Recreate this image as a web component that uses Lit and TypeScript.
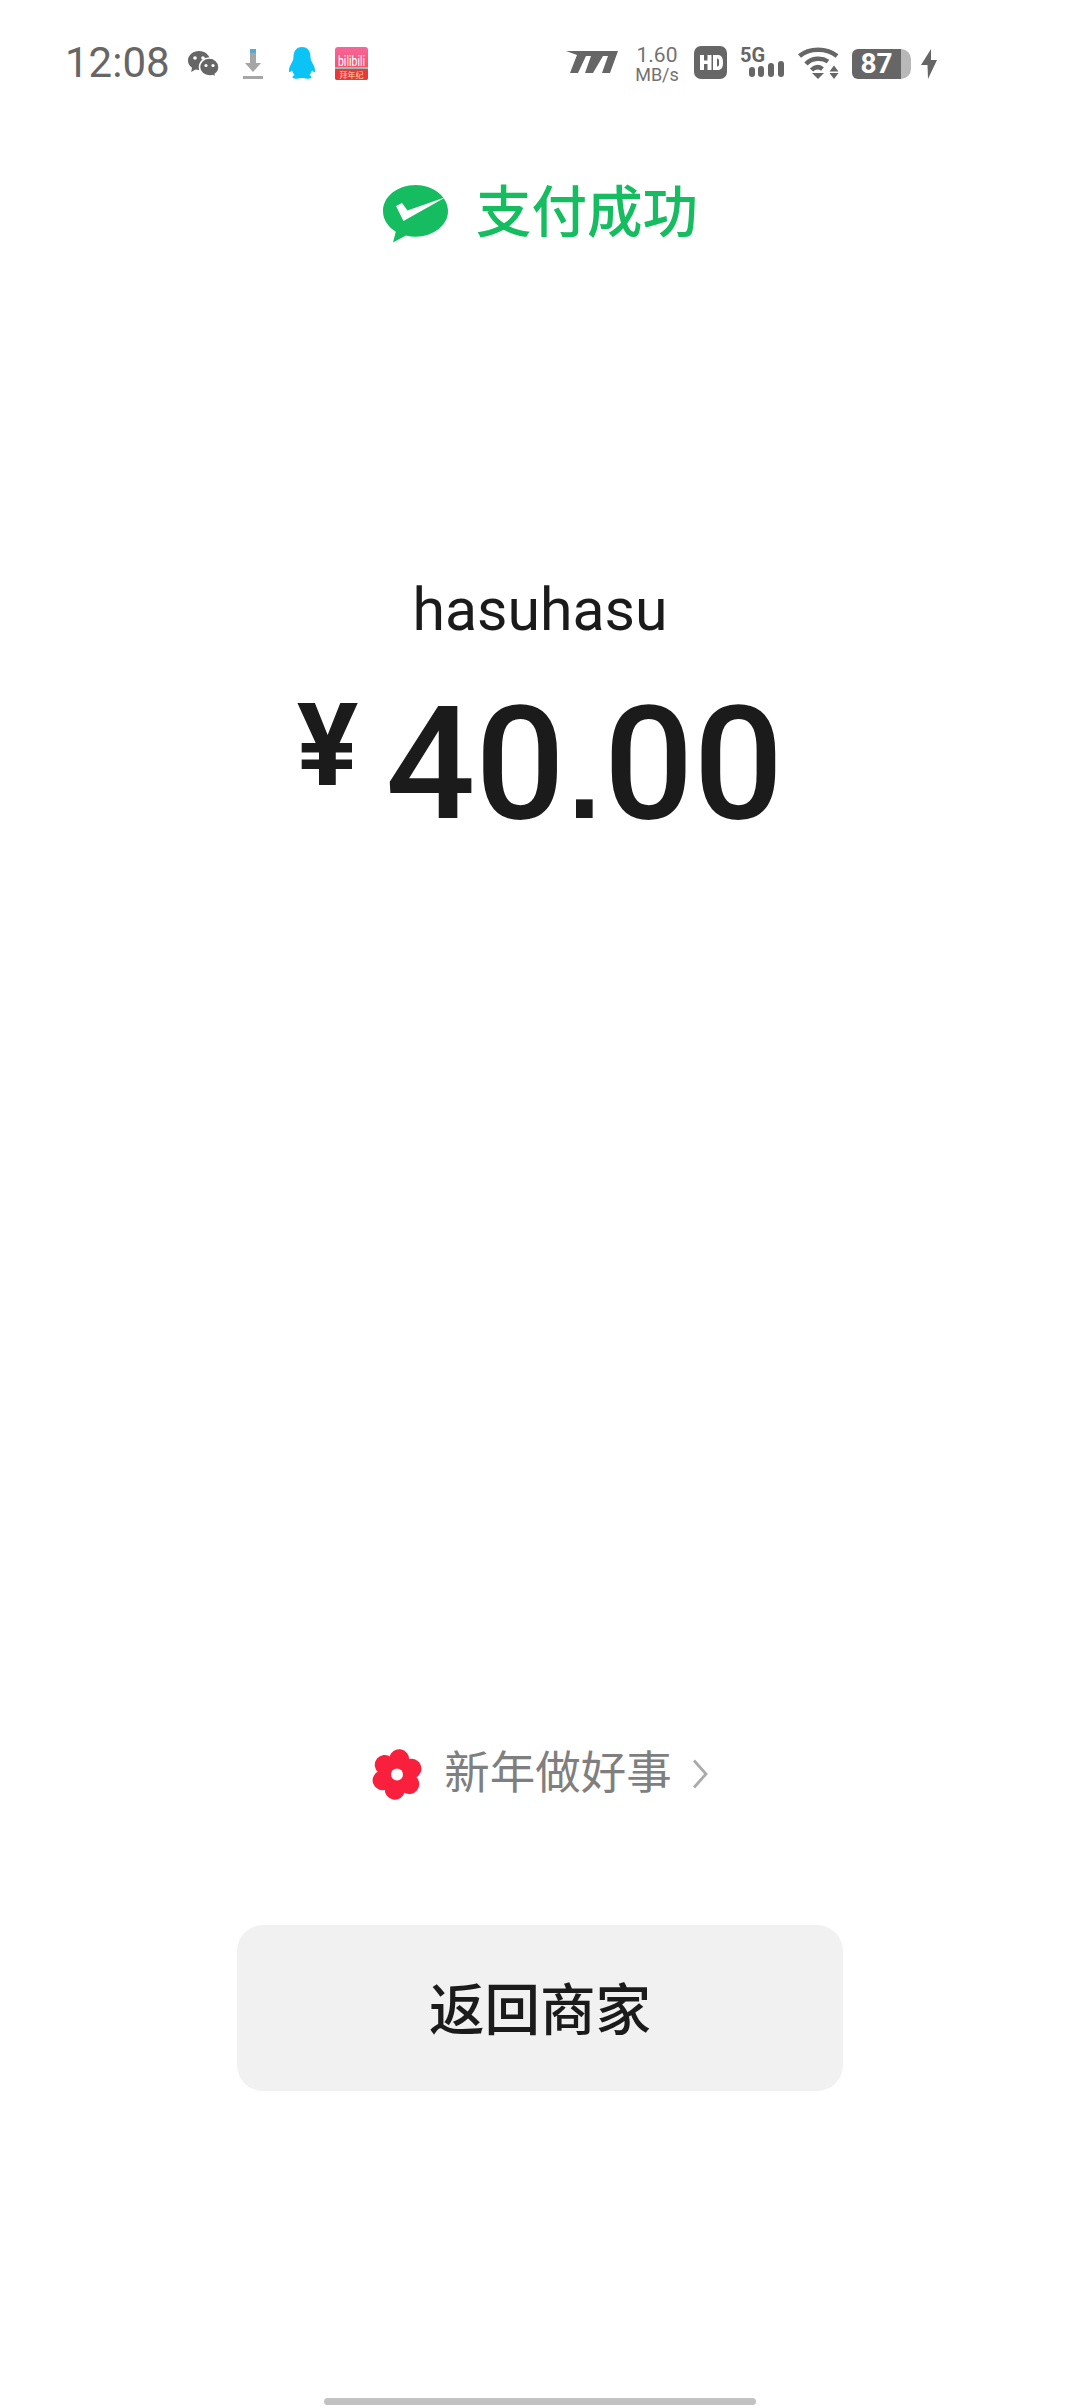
import {LitElement, html, css, svg} from 'lit';
import {customElement} from 'lit/decorators.js';

const PETALS = [8, 68, 128, 188, 248, 308];

@customElement('app-root')
export class AppRoot extends LitElement {
    static styles = css`
        :host {
            display: block;
            width: 1080px;
            height: 2408px;
            background: #fff;
            font-family: Roboto, "Noto Sans CJK SC", sans-serif;
            color: #1b1b1b;
        }

        .page {
            height: 2408px;
            display: flex;
            flex-direction: column;
            align-items: center;
            overflow: hidden;
        }

        .page > * { flex: none; }

        /* Status bar */
        .status {
            box-sizing: border-box;
            width: 100%;
            height: 126px;
            padding: 45px 143px 0 65px;
            display: flex;
            justify-content: space-between;
            align-items: flex-start;
            color: #666;
        }

        .status-left,
        .status-right {
            display: flex;
            align-items: flex-start;
        }

        .time {
            width: 103px;
            font-size: 42px;
            line-height: 36px;
            color: #666;
        }

        .i-wechat { margin: 5px 0 0 20px; }
        .i-download { margin: 4px 0 0 23px; }
        .i-qq { margin: 2px 0 0 25px; }
        .i-bili { margin: 2px 0 0 19px; }
        .i-hd { margin: 1px 0 0 15px; }
        .i-wifi { margin: 2px 0 0 14px; }
        .i-bolt { margin: 4px 0 0 10px; }
        .i-speed { margin-top: 6px; }

        .speed {
            width: 44px;
            margin-left: 16px;
            display: flex;
            flex-direction: column;
            align-items: center;
            font-size: 21px;
            color: #727272;
        }

        .speed span { line-height: 21px; }
        .speed span + span { font-size: 18px; line-height: 17px; }

        .signal {
            width: 44px;
            margin: 3px 0 0 13px;
            display: flex;
            flex-direction: column;
        }

        .signal-label {
            font-size: 20px;
            font-weight: 700;
            line-height: 14px;
            color: #666;
        }

        .signal svg { margin-top: -15px; }

        .battery {
            margin: 4px 0 0 13px;
            display: flex;
            align-items: center;
        }

        .battery-body {
            width: 49px;
            height: 30px;
            border-radius: 6px 0 0 6px;
            background: #666;
            color: #fff;
            font-size: 28px;
            font-weight: 700;
            line-height: 30px;
            text-align: center;
        }

        .battery-rest {
            width: 10px;
            height: 30px;
            border-radius: 0 10px 10px 0;
            background: #b8b8b8;
        }

        /* Result */
        .result {
            margin-top: 56px;
            display: flex;
            align-items: center;
            gap: 27px;
        }

        .result-text {
            font-size: 55.5px;
            line-height: 64px;
            font-weight: 500;
            color: #15bd60;
        }

        .payee {
            margin-top: 331px;
            font-size: 59px;
            line-height: 66px;
            color: #1b1b1b;
        }

        .amount {
            margin-top: 46px;
            display: flex;
            align-items: flex-start;
            gap: 27px;
            height: 150px;
        }

        .yen {
            font-size: 115px;
            line-height: 110px;
            font-weight: 700;
            margin-top: 2px;
        }

        .value {
            font-size: 158px;
            line-height: 150px;
            font-weight: 500;
        }

        .dot {
            font-family: "Liberation Sans", sans-serif;
            font-size: 175px;
            line-height: 0;
            margin: 0 -5px;
        }

        /* Bottom */
        .promo {
            margin-top: 909px;
            display: flex;
            align-items: center;
            color: #7f7f7f;
            font-size: 45.5px;
            line-height: 52px;
        }

        .promo-text { margin: 0 20px 0 22px; }

        .back {
            margin-top: 125px;
            box-sizing: border-box;
            width: 606px;
            height: 166px;
            padding-bottom: 5px;
            border-radius: 26px;
            background: #f1f1f1;
            display: flex;
            align-items: center;
            justify-content: center;
            font-size: 55.5px;
            font-weight: 500;
            color: #1b1b1b;
        }

        .home {
            margin-top: 307px;
            width: 432px;
            height: 7px;
            border-radius: 4px;
            background: #c2c2c2;
        }

        svg { display: block; flex: none; }
    `;

    render() {
        return html`
            <div class="page">
                <div class="status">
                    <div class="status-left">
                        <div class="time">12:08</div>
                        ${this.renderWechat()}
                        ${this.renderDownload()}
                        ${this.renderQQ()}
                        ${this.renderBili()}
                    </div>
                    <div class="status-right">
                        ${this.renderSpeedLogo()}
                        <div class="speed"><span>1.60</span><span>MB/s</span></div>
                        ${this.renderHD()}
                        <div class="signal">
                            <div class="signal-label">5G</div>
                            ${this.renderBars()}
                        </div>
                        ${this.renderWifi()}
                        <div class="battery">
                            <div class="battery-body">87</div>
                            <div class="battery-rest"></div>
                        </div>
                        ${this.renderBolt()}
                    </div>
                </div>

                <div class="result">
                    ${this.renderPayLogo()}
                    <div class="result-text">支付成功</div>
                </div>

                <div class="payee">hasuhasu</div>
                <div class="amount">
                    <div class="yen">¥</div>
                    <div class="value">40<span class="dot">.</span>00</div>
                </div>

                <div class="promo">
                    ${this.renderFlower()}
                    <span class="promo-text">新年做好事</span>
                    <svg width="16" height="30" viewBox="0 0 16 30">
                        <path d="M2 1.5 14 15 2 28.5" fill="none" stroke="#ababab" stroke-width="2.8"/>
                    </svg>
                </div>

                <div class="back">返回商家</div>
                <div class="home"></div>
            </div>
        `;
    }

    renderWechat() {
        return html`<svg class="i-wechat" width="32" height="27" viewBox="0 0 32 27">
            <path d="M11 1C5 1 0 5.200 0 10.500c0 3 1.600 5.600 4 7.300L3.200 22l4.400-2.400c1.100.3 2.200.4 3.400.4 6 0 11-4.200 11-9.500S17 1 11 1z" fill="#666"/>
            <path d="M21.500 8C16 8 11.500 12 11.500 17s4.500 9 10 9c1 0 2-.1 3-.4l3.600 1.400-.8-3c2.400-1.600 3.700-4 3.700-7 0-5-4.500-9-9.500-9z" fill="#666" stroke="#fff" stroke-width="1.500"/>
            <circle cx="7" cy="8" r="1.800" fill="#fff"/>
            <circle cx="15" cy="8" r="1.800" fill="#fff"/>
            <circle cx="18" cy="15.500" r="1.600" fill="#fff"/>
            <circle cx="25" cy="15.500" r="1.600" fill="#fff"/>
        </svg>`;
    }

    renderDownload() {
        return html`<svg class="i-download" width="20" height="30" viewBox="0 0 20 30">
            <rect x="7" y="0" width="6" height="4" fill="#5aa9d0"/>
            <path d="M7 4h6v10h5l-8 9-8-9h5z" fill="#a6a6a6"/>
            <rect x="0" y="27" width="20" height="3" fill="#a6a6a6"/>
        </svg>`;
    }

    renderQQ() {
        return html`<svg class="i-qq" width="28" height="32" viewBox="0 0 28 32">
            <path d="M14 0C8 0 5.500 4.500 5.500 10c0 1.500-.3 3-1 4.300C2.500 18 .5 21.500 1 24.500c.2 1.200 1.800.6 3-1.200.4 1.800 1.300 3.400 2.600 4.600C4.500 28.600 4 30 5 31c1.500 1 5 1 7.500 0h3c2.500 1 6 1 7.500 0 1-1 .5-2.400-1.600-3.100 1.300-1.200 2.200-2.800 2.600-4.600 1.200 1.800 2.800 2.400 3 1.200.5-3-1.500-6.500-3.500-10.200-.7-1.300-1-2.800-1-4.300C22.500 4.500 20 0 14 0z" fill="#0cc3f6"/>
        </svg>`;
    }

    renderBili() {
        return html`<svg class="i-bili" width="33" height="33" viewBox="0 0 33 33">
            <defs>
                <linearGradient id="bili-bg" x1="0" y1="0" x2="0" y2="1">
                    <stop offset="0" stop-color="#f9659b"/>
                    <stop offset="0.6" stop-color="#f4566f"/>
                    <stop offset="1" stop-color="#ea3d3c"/>
                </linearGradient>
            </defs>
            <rect width="33" height="33" rx="3" fill="url(#bili-bg)"/>
            <text x="16.500" y="13.600" transform="scale(1 1.400)" text-anchor="middle" font-size="10.500" fill="#fff" font-family="Roboto, sans-serif">bilibili</text>
            <rect y="20" width="33" height="2" fill="#8fc2b6"/>
            <rect y="22" width="33" height="11" rx="2" fill="#e8383a"/>
            <text x="16.500" y="31" text-anchor="middle" font-size="8" fill="#ffd9b0" font-family="Noto Sans CJK SC, sans-serif">拜年纪</text>
        </svg>`;
    }

    renderSpeedLogo() {
        return html`<svg class="i-speed" width="53" height="23" viewBox="0 0 53 23">
            <path d="M0 0H52L44 22H36L42 5H37L27 22H19L25 5H20L12 22H4L11 4Z" fill="#666"/>
        </svg>`;
    }

    renderHD() {
        return html`<svg class="i-hd" width="33" height="33" viewBox="0 0 33 33">
            <rect width="33" height="33" rx="7" fill="#666"/>
            <path d="M6 9h4v5.500h3.500V9h4v15h-4v-6h-3.500v6H6z" fill="#fff"/>
            <path fill-rule="evenodd" d="M19 9h4.500c4 0 5.500 2.500 5.500 7.500S27.500 24 23.500 24H19zM23 12.500v8h.5c1.300 0 1.600-1 1.600-4s-.3-4-1.600-4z" fill="#fff"/>
        </svg>`;
    }

    renderBars() {
        return html`<svg width="44" height="30" viewBox="0 0 44 30">
            <rect x="9" y="20" width="6" height="10" rx="3" fill="#666"/>
            <rect x="18" y="19" width="6" height="11" rx="3" fill="#666"/>
            <rect x="28" y="16" width="6" height="14" rx="3" fill="#666"/>
            <rect x="38" y="14" width="6" height="16" rx="3" fill="#666"/>
        </svg>`;
    }

    renderWifi() {
        return html`<svg class="i-wifi" width="41" height="32" viewBox="0 0 41 32">
            <g fill="none" stroke="#666" stroke-width="4.500">
                <path d="M1.500 9C11 .500 29 .500 39 9"/>
                <path d="M8 17C14 10.500 24 10.500 30 14.500"/>
                <path d="M13.500 23C17 19.500 21 19.500 24.500 22"/>
            </g>
            <path d="M14 26h12l-6 6z" fill="#666"/>
            <path d="M36 18.500l4.500 6H31.500z" fill="#666"/>
            <path d="M31.500 26h9l-4.500 6z" fill="#666"/>
        </svg>`;
    }

    renderBolt() {
        return html`<svg class="i-bolt" width="16" height="30" viewBox="0 0 16 30">
            <path d="M10 0 0 16h6.500L7 30 16 11h-6z" fill="#666"/>
        </svg>`;
    }

    renderPayLogo() {
        return html`<svg width="67" height="60" viewBox="0 0 67 60">
            <path d="M33.500 1C15.500 1 1 12.600 1 27c0 8.500 5 16 12.800 20.700L11 58.500l13-7c3 .8 6.200 1.200 9.500 1.200 18 0 32.500-11.500 32.500-25.700S51.500 1 33.500 1z" fill="#15bd60"/>
            <path d="M14 22 20 19 25.500 26.500 64 13 21.500 37z" fill="#fff"/>
        </svg>`;
    }

    renderFlower() {
        return html`<svg width="50" height="51" viewBox="-25 -25.500 50 51">
            <g fill="#f8203c">
                <circle r="13"/>
                ${PETALS.map(a => svg`<circle r="10" cx="0" cy="-15.500" transform="rotate(${a})"/>`)}
            </g>
            <circle r="6" fill="#fff"/>
        </svg>`;
    }
}
